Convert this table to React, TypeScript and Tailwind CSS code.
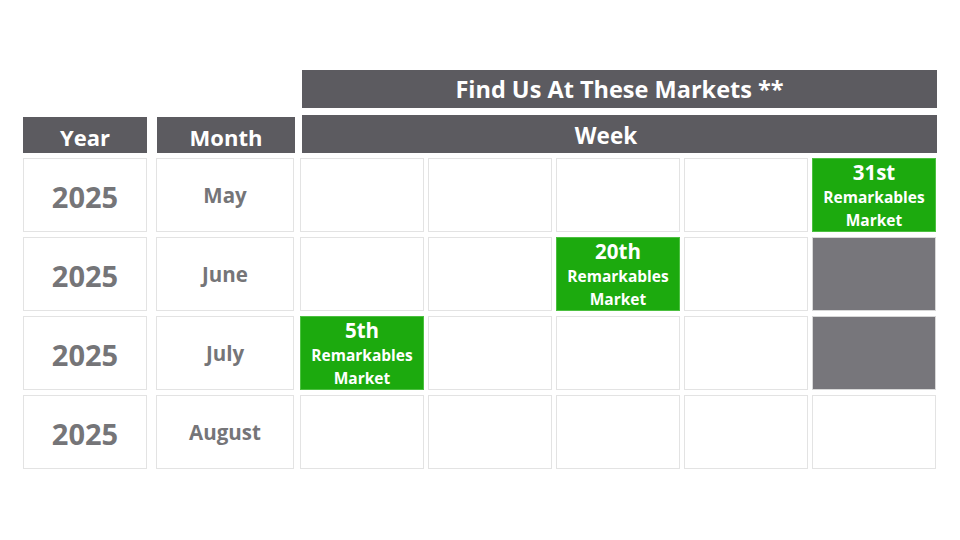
import React from "react";

type Cell = { kind: "empty" } | { kind: "grey" } | { kind: "green"; day: string };

const rows: { year: string; month: string; cells: Cell[] }[] = [
  {
    year: "2025",
    month: "May",
    cells: [{ kind: "empty" }, { kind: "empty" }, { kind: "empty" }, { kind: "empty" }, { kind: "green", day: "31st" }],
  },
  {
    year: "2025",
    month: "June",
    cells: [{ kind: "empty" }, { kind: "empty" }, { kind: "green", day: "20th" }, { kind: "empty" }, { kind: "grey" }],
  },
  {
    year: "2025",
    month: "July",
    cells: [{ kind: "green", day: "5th" }, { kind: "empty" }, { kind: "empty" }, { kind: "empty" }, { kind: "grey" }],
  },
  {
    year: "2025",
    month: "August",
    cells: [{ kind: "empty" }, { kind: "empty" }, { kind: "empty" }, { kind: "empty" }, { kind: "empty" }],
  },
];

function WeekCell({ cell }: { cell: Cell }) {
  if (cell.kind === "green") {
    return (
      <div className="w-[124px] h-[74px] bg-[#1caa0e] border border-[#4cc040] flex flex-col items-center text-white font-bold leading-none pt-[1px]">
        <div className="text-[20.5px] leading-[25px]">{cell.day}</div>
        <div className="text-[15.5px] leading-[25px]">Remarkables</div>
        <div className="text-[15.5px] leading-[20px]">Market</div>
      </div>
    );
  }
  if (cell.kind === "grey") {
    return <div className="w-[124px] h-[74px] bg-[#77767b] border border-[#d8d8d8]" />;
  }
  return <div className="w-[124px] h-[74px] bg-white border-[1.5px] border-[#e3e3e3]" />;
}

export default function App() {
  return (
    <div
      className="w-[960px] h-[540px] bg-white overflow-hidden pl-[23px] pt-[70px]"
      style={{ fontFamily: '"Open Sans", "Liberation Sans", sans-serif' }}
    >
      <div className="flex flex-col gap-[5px]">
        {/* header row */}
        <div className="flex items-end">
          <div className="w-[124px] h-[36px] bg-[#5c5b60] text-white font-bold text-[22px] flex items-center justify-center pt-[4px]">
            Year
          </div>
          <div className="ml-[10px] w-[138px] h-[36px] bg-[#5c5b60] text-white font-bold text-[22px] flex items-center justify-center pt-[4px]">
            Month
          </div>
          <div className="ml-[7px] w-[635px] flex flex-col gap-[7px]">
            <div className="h-[38px] bg-[#5c5b60] text-white font-bold text-[23.5px] flex items-center justify-center pt-[1px]">
              Find Us At These Markets **
            </div>
            <div className="h-[38px] bg-[#5c5b60] text-white font-bold text-[22.5px] flex items-center justify-center pr-[27px] pt-[3px]">
              Week
            </div>
          </div>
        </div>
        {rows.map((r, i) => (
          <div key={i} className="flex">
            <div className="w-[124px] h-[74px] border-[1.5px] border-[#e3e3e3] flex items-center justify-center text-[#757578] font-bold text-[29px] pt-[4px]">
              {r.year}
            </div>
            <div className="ml-[9px] w-[138px] h-[74px] border-[1.5px] border-[#e3e3e3] flex items-center justify-center text-[#757578] font-bold text-[20.5px]">
              {r.month}
            </div>
            <div className="ml-[6px] flex gap-[4px]">
              {r.cells.map((c, j) => (
                <WeekCell key={j} cell={c} />
              ))}
            </div>
          </div>
        ))}
      </div>
    </div>
  );
}
